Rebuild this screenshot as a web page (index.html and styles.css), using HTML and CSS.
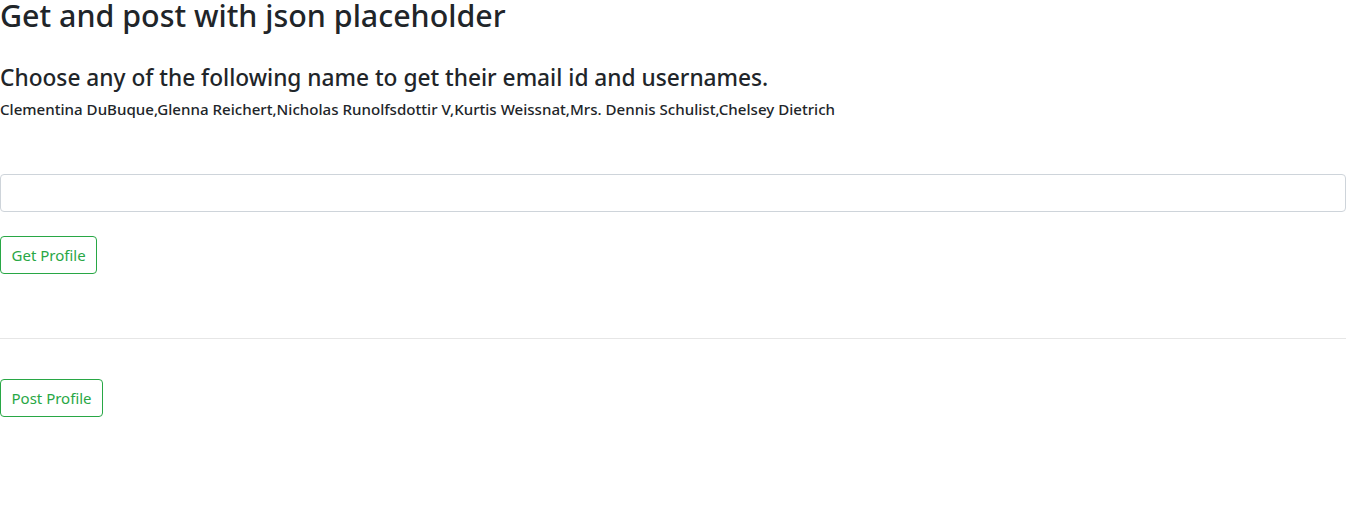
FILE: index.html
```html
<!DOCTYPE html>
<html lang="en">
<head>
<meta charset="utf-8">
<title>Get and post with json placeholder</title>
<link rel="stylesheet" href="styles.css">
</head>
<body>
<main class="page">
  <h2 class="title">Get and post with json placeholder</h2>
  <h4 class="subtitle">Choose any of the following name to get their email id and usernames.</h4>
  <h6 class="names">Clementina DuBuque,Glenna Reichert,Nicholas Runolfsdottir V,Kurtis Weissnat,Mrs. Dennis Schulist,Chelsey Dietrich</h6>
  <input class="field" type="text">
  <div class="action"><button class="btn-outline" type="button">Get Profile</button></div>
  <hr class="divider">
  <div class="action post"><button class="btn-outline" type="button">Post Profile</button></div>
</main>
</body>
</html>
```
FILE: styles.css
```css
* { box-sizing: border-box; }
html, body { margin: 0; padding: 0; background: #fff; }
body {
  font-family: "Noto Sans", "Open Sans", sans-serif;
  color: #212529;
  font-size: 16px;
  line-height: 1.5;
}
.page { display: flex; flex-direction: column; align-items: stretch; }
.title {
  margin: 0;
  font-size: 30.4px;
  font-weight: 500;
  line-height: 32px;
}
.subtitle {
  margin: 31px 0 0;
  font-size: 22.7px;
  font-weight: 500;
  line-height: 30px;
}
.names {
  margin: 6px 0 0;
  font-size: 15.1px;
  font-weight: 500;
  line-height: 20px;
}
.field {
  display: block;
  width: 100%;
  height: 38px;
  margin-top: 55px;
  border: 1px solid #ced4da;
  border-radius: 4px;
  background: #fff;
  font: inherit;
}
.action { display: flex; margin-top: 24px; }
.btn-outline {
  font-family: inherit;
  font-size: 15px;
  line-height: 22px;
  padding: 7px 10.5px;
  height: 38px;
  color: #28a745;
  background: transparent;
  border: 1px solid #28a745;
  border-radius: 4px;
}
.divider {
  margin: 64px 0 0;
  border: 0;
  border-top: 1px solid #e6e6e6;
  width: 100%;
}
.post { margin-top: 40px; }
```
